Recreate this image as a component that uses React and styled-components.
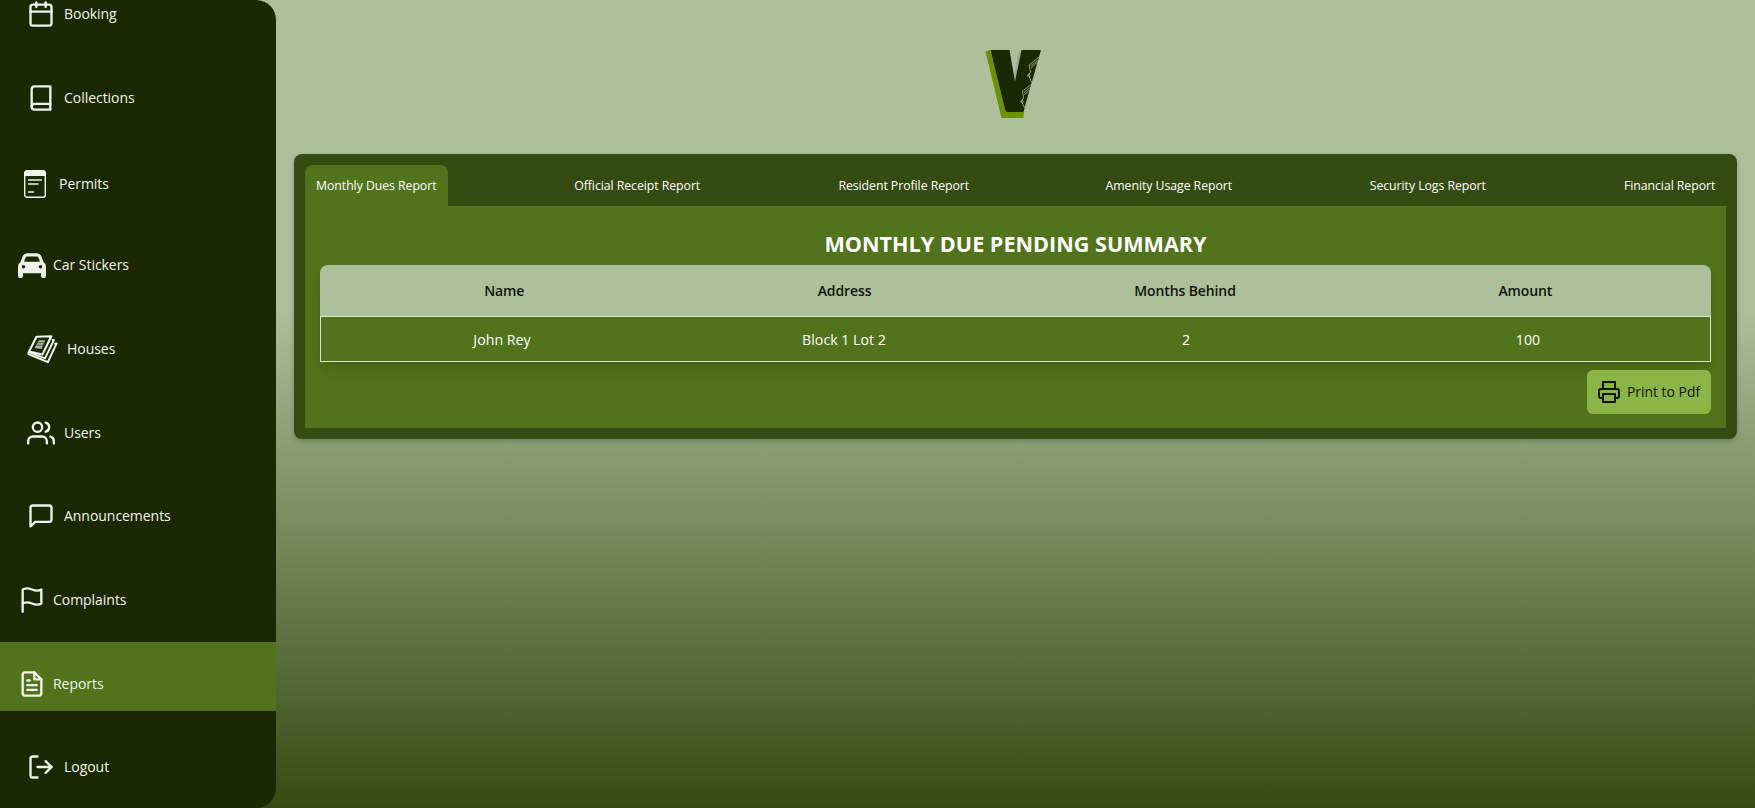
import React from "react";
import styled, { createGlobalStyle } from "styled-components";
import { FiCalendar, FiBook, FiUsers, FiMessageSquare, FiFlag, FiFileText, FiLogOut, FiPrinter } from "react-icons/fi";

const GlobalStyle = createGlobalStyle`
  * { box-sizing: border-box; }
  body {
    margin: 0;
    font-family: "Open Sans", "Noto Sans", sans-serif;
    color: #fff;
  }
`;

const Page = styled.div`
  display: flex;
  height: 808px;
  overflow: hidden;
  background: linear-gradient(180deg, #adc09b 0%, #adc09b 38%, #8fa277 53%, #354b12 100%);
`;

const Sidebar = styled.nav`
  width: 276px;
  height: 808px;
  flex-shrink: 0;
  display: flex;
  flex-direction: column;
  justify-content: flex-end;
  gap: 14.6px;
  padding-bottom: 13.5px;
  overflow: hidden;
  background: #1c2703;
  border-radius: 0 20px 20px 0;
`;

const NavItem = styled.a`
  display: flex;
  align-items: center;
  flex-shrink: 0;
  height: 69px;
  padding-top: ${(p) => p.$top ?? 14}px;
  padding-left: ${(p) => p.$left}px;
  gap: ${(p) => p.$gap}px;
  background: ${(p) => (p.$active ? "#50731b" : "transparent")};
  color: #f1f4ec;
  svg { flex-shrink: 0; }
`;

const NavLabel = styled.span`
  font-size: 14px;
  line-height: 20px;
  white-space: nowrap;
  letter-spacing: -0.04px;
`;

const Main = styled.main`
  flex: 1;
  min-width: 0;
  display: flex;
  flex-direction: column;
  padding: 49px 18px 0;
`;

const LogoBar = styled.header`
  display: flex;
  justify-content: center;
  height: 105px;
  padding-right: 4px;
`;

const Panel = styled.section`
  background: #344c12;
  border-radius: 8px;
  padding: 11px;
  height: 285px;
  box-shadow: 0 2px 5px rgba(0, 0, 0, 0.22);
`;

const Tabs = styled.div`
  display: flex;
  justify-content: space-between;
  height: 41px;
`;

const Tab = styled.button`
  border: 0;
  padding: 0 11px;
  height: 41px;
  width: ${(p) => p.$w}px;
  border-radius: 8px 8px 0 0;
  background: ${(p) => (p.$active ? "#50731b" : "transparent")};
  color: #fff;
  font: 400 12.3px/41px "Open Sans", sans-serif;
  letter-spacing: -0.06px;
  text-align: left;
  white-space: nowrap;
`;

const Body = styled.div`
  height: 222px;
  background: #50731b;
  padding: 22px 15px 0;
  display: flex;
  flex-direction: column;
`;

const Title = styled.h1`
  margin: 0;
  height: 37px;
  font-size: 21.6px;
  font-weight: 700;
  line-height: 32px;
  text-align: center;
`;

const Table = styled.div`
  border-radius: 8px 8px 0 0;
  box-shadow: 0 10px 15px -3px rgba(0, 0, 0, 0.12), 0 4px 6px -2px rgba(0, 0, 0, 0.08);
`;

const HeadRow = styled.div`
  display: grid;
  grid-template-columns: repeat(4, 340.4px);
  padding-left: 14px;
  height: 51px;
  line-height: 52px;
  background: #adc09b;
  border-radius: 8px 8px 0 0;
  color: #10150a;
  font-size: 14px;
  font-weight: 600;
  letter-spacing: -0.1px;
  text-align: center;
`;

const DataRow = styled.div`
  display: grid;
  grid-template-columns: repeat(4, 342px);
  padding-left: 10px;
  height: 46px;
  line-height: 45px;
  border: 1px solid #dbe5cf;
  background: #50731b;
  font-size: 14.2px;
  text-align: center;
`;

const PrintButton = styled.button`
  align-self: flex-end;
  display: flex;
  align-items: center;
  gap: 6px;
  width: 124px;
  height: 44px;
  margin-top: 8px;
  padding: 0 0 0 10px;
  border: 0;
  border-radius: 6px;
  background: #8bb546;
  color: #10150a;
  font: 400 13.9px/44px "Open Sans", sans-serif;
  white-space: nowrap;
`;

const Logo = () => (
  <svg width="58" height="70" viewBox="0 0 58 70">
    <path d="M0.5 2.5 5 1 24 62 39 62 38.5 69H16.5Z" fill="#6b9107" />
    <path d="M28 33 33 4 37 1 34 34Z" fill="#a3a89b" />
    <path d="M5.5 1H24.5L30 32.5 36.5 1H56L40 57 39 61.5Q38.6 63 37 63H22.5Q20.8 63 20.3 61Z" fill="#1c2703" />
    <g fill="none" stroke="#b9c3ad" strokeWidth="0.7">
      <path d="M54 8 44 16 45.5 23 43.5 26 46.5 33 48 35" />
      <path d="M53 11 45.5 17M52.5 13 46 19" />
      <path d="M48 34 37.5 42 38.5 49 36.5 52 39 58 41 58" />
      <path d="M47 37 39 43.5M46 40 39.5 45.5" />
      <circle cx="43.8" cy="26.5" r="1.2" />
      <circle cx="37" cy="52.5" r="1.2" />
    </g>
  </svg>
);

const PermitIcon = () => (
  <svg width="22" height="28" viewBox="0 0 22 28" fill="none" stroke="#f1f4ec">
    <rect x="0.7" y="0.7" width="20.6" height="26.6" rx="2.4" strokeWidth="1.4" />
    <path d="M0.5 6V2.8Q.5.5 2.8.5H19.2Q21.5.5 21.5 2.8V6Z" fill="#f1f4ec" stroke="none" />
    <path d="M4.5 10H17.5M4.5 14H14M4.5 22H9.5" strokeWidth="1.4" strokeLinecap="round" />
  </svg>
);

const CarIcon = () => (
  <svg width="28" height="25" viewBox="0 0 28 25" fill="#eef2ea">
    <path
      fillRule="evenodd"
      d="M9 0.3H19Q22 0.3 23.2 3L25.6 9.2Q28 10.6 28 13.5V23Q28 25 26 25H25Q23 25 23 23V20.2H5V23Q5 25 3 25H2Q0 25 0 23V13.5Q0 10.6 2.4 9.2L4.8 3Q6 0.3 9 0.3ZM9.3 3.6Q8 3.6 7.5 4.8L6 8.8H22L20.5 4.8Q20 3.6 18.7 3.6ZM5.5 11.9A1.8 1.8 0 1 0 5.5 15.5 1.8 1.8 0 1 0 5.5 11.9ZM22.5 11.9A1.8 1.8 0 1 0 22.5 15.5 1.8 1.8 0 1 0 22.5 11.9Z"
    />
  </svg>
);

const PapersIcon = () => (
  <svg width="31" height="29" viewBox="0 0 31 29" fill="none" stroke="#f4f7ef" strokeLinejoin="round">
    <path d="M9.5 1.8 24.3 1.2 15.4 19.6 2 16.6Z" strokeWidth="2.1" />
    <path d="M11.8 5.2H18.4L14.4 13.9 7.6 12.9Z" fill="#a9b59b" stroke="none" />
    <path d="M10.8 7.7H17.2M9.6 10.2H16" stroke="#1c2703" strokeWidth="0.6" />
    <path d="M24.8 5.3 26.9 5 18 23.3 2 17.2" strokeWidth="1.9" />
    <path d="M27.4 8.7 29.6 8.4 20.9 27.2 1.4 19 1.8 16.8" strokeWidth="2" />
  </svg>
);

const nav = [
  { label: "Booking", icon: <FiCalendar size={28} />, left: 27, gap: 9, top: 13 },
  { label: "Collections", icon: <FiBook size={28} />, left: 27, gap: 9 },
  { label: "Permits", icon: <PermitIcon />, left: 24, gap: 13, top: 19 },
  { label: "Car Stickers", icon: <CarIcon />, left: 18, gap: 7 },
  { label: "Houses", icon: <PapersIcon />, left: 27, gap: 9 },
  { label: "Users", icon: <FiUsers size={28} />, left: 27, gap: 9 },
  { label: "Announcements", icon: <FiMessageSquare size={28} />, left: 27, gap: 9 },
  { label: "Complaints", icon: <FiFlag size={28} />, left: 18, gap: 7 },
  { label: "Reports", icon: <FiFileText size={28} />, left: 18, gap: 7, top: 15, active: true },
  { label: "Logout", icon: <FiLogOut size={28} />, left: 27, gap: 9 },
];

const tabs = [
  ["Monthly Dues Report", 143],
  ["Official Receipt Report", 149],
  ["Resident Profile Report", 152],
  ["Amenity Usage Report", 149],
  ["Security Logs Report", 139],
  ["Financial Report", 113],
];

export default function App() {
  return (
    <Page>
      <GlobalStyle />
      <Sidebar>
        {nav.map((n) => (
          <NavItem key={n.label} $left={n.left} $gap={n.gap} $top={n.top} $active={n.active}>
            {n.icon}
            <NavLabel>{n.label}</NavLabel>
          </NavItem>
        ))}
      </Sidebar>
      <Main>
        <LogoBar><Logo /></LogoBar>
        <Panel>
          <Tabs>
            {tabs.map(([label, w], i) => (
              <Tab key={label} $w={w} $active={i === 0}>{label}</Tab>
            ))}
          </Tabs>
          <Body>
            <Title>MONTHLY DUE PENDING SUMMARY</Title>
            <Table>
              <HeadRow>
                <span>Name</span><span>Address</span><span>Months Behind</span><span>Amount</span>
              </HeadRow>
              <DataRow>
                <span>John Rey</span><span>Block 1 Lot 2</span><span>2</span><span>100</span>
              </DataRow>
            </Table>
            <PrintButton><FiPrinter size={24} />Print to Pdf</PrintButton>
          </Body>
        </Panel>
      </Main>
    </Page>
  );
}
